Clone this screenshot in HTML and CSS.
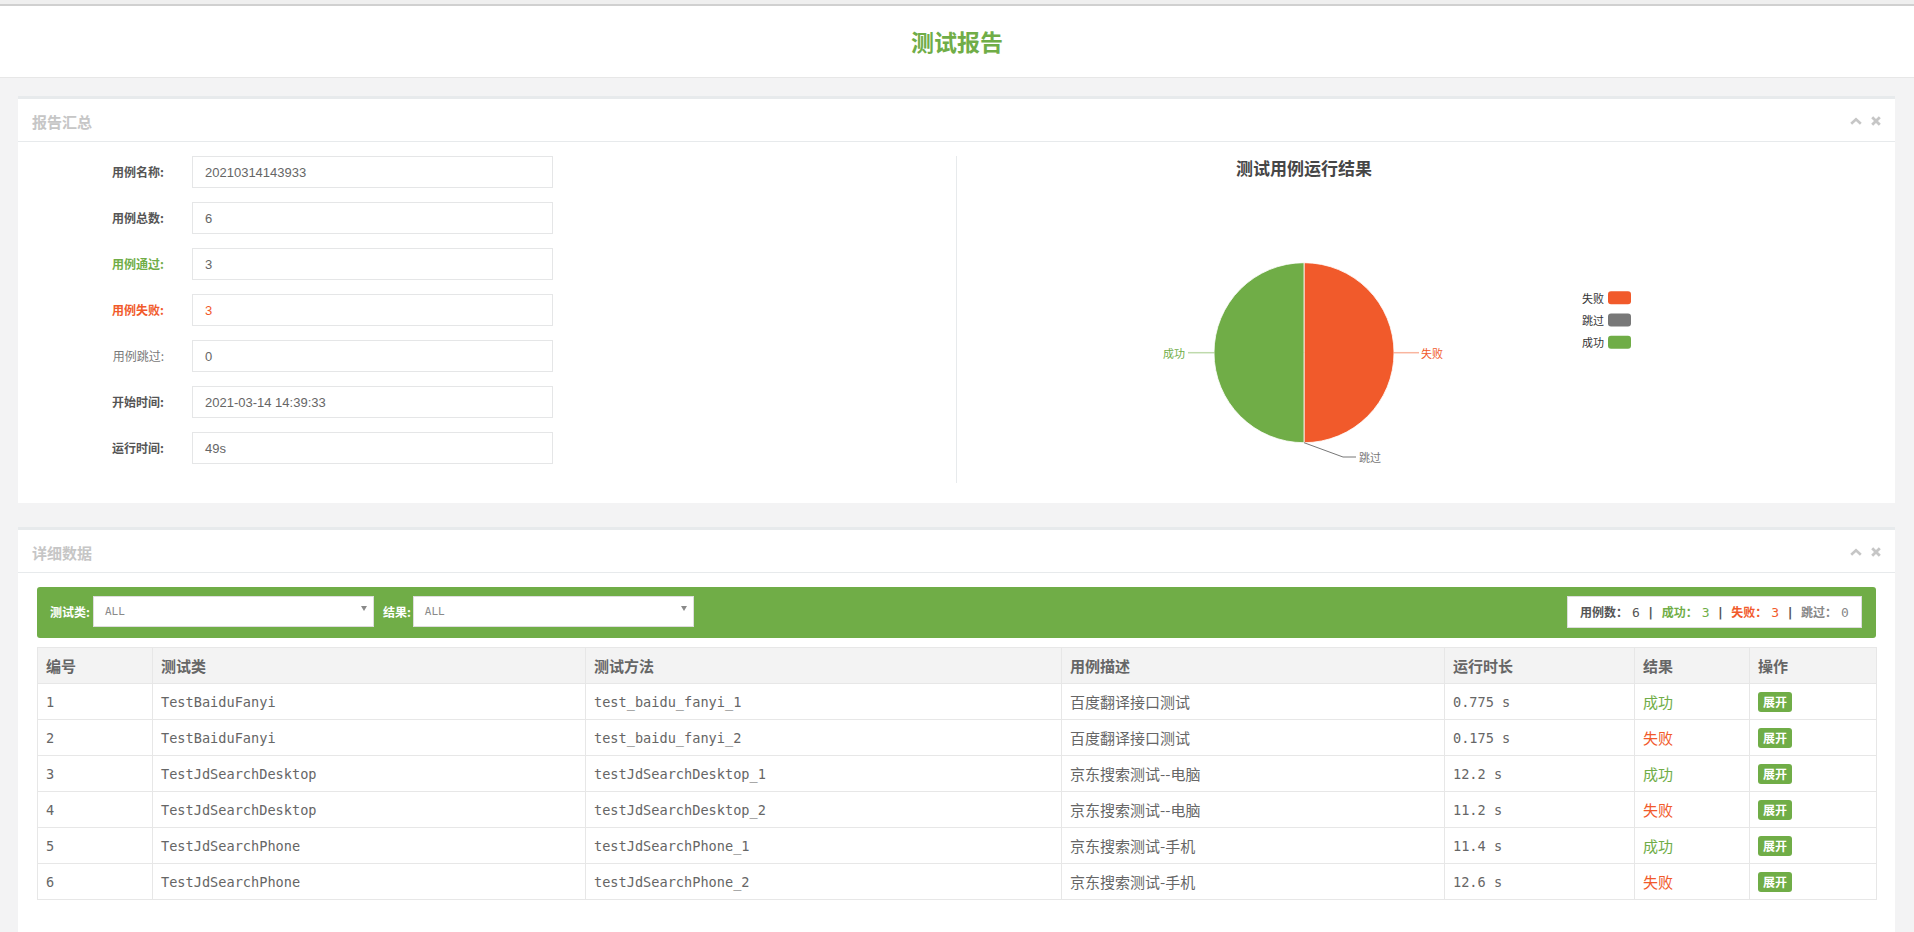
FILE: index.html
```html
<!DOCTYPE html>
<html lang="zh-CN">
<head>
<meta charset="utf-8">
<title>测试报告</title>
<link rel="stylesheet" href="styles.css">
</head>
<body>
<div class="top-strip"></div>
<header class="page-header">
  <h1 class="page-title">测试报告</h1>
</header>

<main class="wrapper">
  <section class="ibox">
    <div class="ibox-title">
      <h5>报告汇总</h5>
      <div class="tools">
        <svg class="tool-icon" width="12" height="8" viewBox="0 0 12 8"><polyline points="1.2,6.8 6,2.2 10.8,6.8" fill="none" stroke="#c6c6c6" stroke-width="2.6"/></svg>
        <svg class="tool-icon" width="10" height="10" viewBox="0 0 10 10"><path d="M1.2 1.2 L8.8 8.8 M8.8 1.2 L1.2 8.8" stroke="#c6c6c6" stroke-width="2.8"/></svg>
      </div>
    </div>
    <div class="ibox-content summary">
      <div class="form-col">
        <div class="form-row"><label class="form-label">用例名称:</label><div class="form-input">20210314143933</div></div>
        <div class="form-row"><label class="form-label">用例总数:</label><div class="form-input">6</div></div>
        <div class="form-row"><label class="form-label pass">用例通过:</label><div class="form-input">3</div></div>
        <div class="form-row"><label class="form-label fail">用例失败:</label><div class="form-input fail">3</div></div>
        <div class="form-row"><label class="form-label skip">用例跳过:</label><div class="form-input">0</div></div>
        <div class="form-row"><label class="form-label">开始时间:</label><div class="form-input">2021-03-14 14:39:33</div></div>
        <div class="form-row"><label class="form-label">运行时间:</label><div class="form-input">49s</div></div>
      </div>
      <div class="chart-col">
        <svg class="pie-chart" width="694" height="327" viewBox="0 0 694 327">
          <text class="chart-title" x="347" y="11" text-anchor="middle" dominant-baseline="central">测试用例运行结果</text>
          <path d="M347 196.7 L347 106.7 A90 90 0 0 1 347 286.7 Z" fill="#f15a2b" stroke="#ffffff" stroke-width="0.8"/>
          <path d="M347 196.7 L347 286.7 A90 90 0 0 1 347 106.7 Z" fill="#70ad47" stroke="#ffffff" stroke-width="0.8"/>
          <line x1="437" y1="196.7" x2="462" y2="196.7" stroke="#f15a2b" stroke-opacity="0.45" stroke-width="1.5"/>
          <text class="pie-label fail-fill" x="464" y="197" dominant-baseline="central">失败</text>
          <line x1="257" y1="196.7" x2="231" y2="196.7" stroke="#70ad47" stroke-opacity="0.45" stroke-width="1.5"/>
          <text class="pie-label pass-fill" x="228" y="197" text-anchor="end" dominant-baseline="central">成功</text>
          <polyline points="347,286.7 386,301 399,301" fill="none" stroke="#777777" stroke-width="1"/>
          <text class="pie-label skip-fill" x="402" y="301" dominant-baseline="central">跳过</text>
          <text class="legend-text" x="647" y="141.7" text-anchor="end" dominant-baseline="central">失败</text>
          <rect x="651" y="135.2" width="23" height="13" rx="3" fill="#f15a2b"/>
          <text class="legend-text" x="647" y="164" text-anchor="end" dominant-baseline="central">跳过</text>
          <rect x="651" y="157.5" width="23" height="13" rx="3" fill="#787878"/>
          <text class="legend-text" x="647" y="186.3" text-anchor="end" dominant-baseline="central">成功</text>
          <rect x="651" y="179.8" width="23" height="13" rx="3" fill="#70ad47"/>
        </svg>
      </div>
    </div>
  </section>

  <section class="ibox">
    <div class="ibox-title">
      <h5>详细数据</h5>
      <div class="tools">
        <svg class="tool-icon" width="12" height="8" viewBox="0 0 12 8"><polyline points="1.2,6.8 6,2.2 10.8,6.8" fill="none" stroke="#c6c6c6" stroke-width="2.6"/></svg>
        <svg class="tool-icon" width="10" height="10" viewBox="0 0 10 10"><path d="M1.2 1.2 L8.8 8.8 M8.8 1.2 L1.2 8.8" stroke="#c6c6c6" stroke-width="2.8"/></svg>
      </div>
    </div>
    <div class="ibox-content detail">
      <div class="filter-bar">
        <span class="filter-label">测试类:</span>
        <div class="select"><span class="select-text">ALL</span><span class="caret"></span></div>
        <span class="filter-label second">结果:</span>
        <div class="select"><span class="select-text">ALL</span><span class="caret"></span></div>
        <div class="stats">
          <b class="st-label">用例数：</b><span class="st-num">6</span><span class="st-sep">|</span><b class="st-label pass">成功：</b><span class="st-num pass">3</span><span class="st-sep">|</span><b class="st-label fail">失败：</b><span class="st-num fail">3</span><span class="st-sep">|</span><b class="st-label skip">跳过：</b><span class="st-num skip">0</span>
        </div>
      </div>

      <table class="data-table">
        <colgroup>
          <col class="c-no"><col class="c-class"><col class="c-method"><col class="c-desc"><col class="c-time"><col class="c-result"><col class="c-op">
        </colgroup>
        <thead>
          <tr><th>编号</th><th>测试类</th><th>测试方法</th><th>用例描述</th><th>运行时长</th><th>结果</th><th>操作</th></tr>
        </thead>
        <tbody>
          <tr><td>1</td><td>TestBaiduFanyi</td><td>test_baidu_fanyi_1</td><td class="cjk">百度翻译接口测试</td><td>0.775 s</td><td class="cjk pass">成功</td><td><span class="btn">展开</span></td></tr>
          <tr><td>2</td><td>TestBaiduFanyi</td><td>test_baidu_fanyi_2</td><td class="cjk">百度翻译接口测试</td><td>0.175 s</td><td class="cjk fail">失败</td><td><span class="btn">展开</span></td></tr>
          <tr><td>3</td><td>TestJdSearchDesktop</td><td>testJdSearchDesktop_1</td><td class="cjk">京东搜索测试--电脑</td><td>12.2 s</td><td class="cjk pass">成功</td><td><span class="btn">展开</span></td></tr>
          <tr><td>4</td><td>TestJdSearchDesktop</td><td>testJdSearchDesktop_2</td><td class="cjk">京东搜索测试--电脑</td><td>11.2 s</td><td class="cjk fail">失败</td><td><span class="btn">展开</span></td></tr>
          <tr><td>5</td><td>TestJdSearchPhone</td><td>testJdSearchPhone_1</td><td class="cjk">京东搜索测试-手机</td><td>11.4 s</td><td class="cjk pass">成功</td><td><span class="btn">展开</span></td></tr>
          <tr><td>6</td><td>TestJdSearchPhone</td><td>testJdSearchPhone_2</td><td class="cjk">京东搜索测试-手机</td><td>12.6 s</td><td class="cjk fail">失败</td><td><span class="btn">展开</span></td></tr>
        </tbody>
      </table>
    </div>
  </section>
</main>
</body>
</html>
```

FILE: styles.css
```css
html, body {
  margin: 0;
  padding: 0;
}

body {
  background: #f3f3f4;
  font-family: "Liberation Sans", Arial, "Noto Sans CJK SC", sans-serif;
  color: #676a6c;
}

.top-strip {
  height: 4px;
  background: #efefef;
  border-bottom: 2px solid #d0d0d0;
}

.page-header {
  height: 71px;
  background: #ffffff;
  border-bottom: 1px solid #e7e7e7;
  display: flex;
  align-items: center;
  justify-content: center;
}

.page-title {
  margin: 0;
  font: bold 23px/1 "Noto Sans CJK SC", sans-serif;
  color: #70ad47;
}

.wrapper {
  padding: 18px 19px 0 18px;
}

.ibox {
  background: #ffffff;
  border-top: 3px solid #e7eaec;
  margin-bottom: 24px;
}

.ibox-title {
  height: 42px;
  border-bottom: 1px solid #e7eaec;
  display: flex;
  align-items: center;
  justify-content: space-between;
  padding: 0 14px;
}

.ibox-title h5 {
  margin: 2px 0 0;
  font: bold 15px/1 "Noto Sans CJK SC", sans-serif;
  color: #c6c6c6;
}

.tools {
  display: flex;
  align-items: center;
  gap: 9px;
  padding-top: 1px;
}

.tool-icon {
  display: block;
}

/* summary panel */
.summary {
  display: flex;
  padding: 14px 19px 20px;
}

.form-col {
  flex: 1;
  border-right: 1px solid #e7eaec;
  display: flex;
  flex-direction: column;
  gap: 14px;
}

.chart-col {
  flex: 1;
}

.form-row {
  display: flex;
  align-items: center;
}

.form-label {
  width: 127px;
  margin-right: 28px;
  text-align: right;
  font: bold 12px/1 "Noto Sans CJK SC", sans-serif;
  color: #555555;
}

.form-label.pass { color: #70ad47; }
.form-label.fail { color: #f15a2b; }
.form-label.skip { color: #7a7a7a; font-weight: normal; }

.form-input {
  width: 361px;
  height: 32px;
  box-sizing: border-box;
  border: 1px solid #e5e6e7;
  padding: 0 12px;
  display: flex;
  align-items: center;
  font: 13px "Liberation Sans", Arial, sans-serif;
  color: #666666;
}

.form-input.fail { color: #f15a2b; }

.pie-chart {
  display: block;
  width: 694px;
  height: 327px;
}

.chart-title {
  font: bold 17px "Noto Sans CJK SC", sans-serif;
  fill: #464646;
}

.pie-label {
  font: 11px "Noto Sans CJK SC", sans-serif;
}

.pass-fill { fill: #70ad47; }
.fail-fill { fill: #f15a2b; }
.skip-fill { fill: #777777; }

.legend-text {
  font: 11px "Noto Sans CJK SC", sans-serif;
  fill: #333333;
}

/* detail panel */
.detail {
  padding: 14px 19px 40px;
}

.filter-bar {
  height: 51px;
  background: #70ad47;
  border-radius: 3px;
  display: flex;
  align-items: center;
  padding: 0 14px 0 13px;
  box-sizing: border-box;
}

.filter-label {
  font: bold 12px/1 "Noto Sans CJK SC", sans-serif;
  color: #ffffff;
  margin-right: 3px;
  margin-top: -2px;
}

.filter-label.second {
  margin-left: 9px;
  margin-right: 2px;
}

.select {
  width: 281px;
  height: 31px;
  box-sizing: border-box;
  background: #ffffff;
  border: 1px solid #dddddd;
  display: flex;
  align-items: center;
  justify-content: space-between;
  padding: 0 6px 0 11px;
  margin-top: -2px;
}

.select-text {
  font: 11px "DejaVu Sans Mono", monospace;
  color: #8a8a8a;
}

.caret {
  width: 0;
  height: 0;
  border-left: 3.5px solid transparent;
  border-right: 3.5px solid transparent;
  border-top: 5px solid #8a8a8a;
  margin-top: -6px;
}

.stats {
  margin-left: auto;
  width: 295px;
  height: 32px;
  box-sizing: border-box;
  background: #ffffff;
  border: 1px solid #dddddd;
  padding-left: 12px;
  display: flex;
  align-items: center;
  white-space: nowrap;
  margin-top: -1px;
}

.st-label {
  font: bold 12px/1 "Noto Sans CJK SC", sans-serif;
  color: #555555;
}

.st-num {
  font: 13px/1 "DejaVu Sans Mono", monospace;
  color: #555555;
  margin-left: 4px;
}

.st-sep {
  font: bold 13px/1 "DejaVu Sans Mono", monospace;
  color: #555555;
  margin: 0 7px;
}

.st-label.pass, .st-num.pass { color: #70ad47; }
.st-label.fail, .st-num.fail { color: #f15a2b; }
.st-label.skip, .st-num.skip { color: #888888; }

/* table */
.data-table {
  width: 100%;
  margin-top: 9px;
  border-collapse: collapse;
  table-layout: fixed;
}

.c-no { width: 115px; }
.c-class { width: 433px; }
.c-method { width: 476px; }
.c-desc { width: 383px; }
.c-time { width: 190px; }
.c-result { width: 115px; }
.c-op { width: 127px; }

.data-table th,
.data-table td {
  border: 1px solid #e7e7e7;
  height: 35px;
  padding: 0 8px;
  text-align: left;
  vertical-align: middle;
  white-space: nowrap;
}

.data-table th {
  background: #f3f3f3;
  font: bold 15px/20px "Noto Sans CJK SC", sans-serif;
  color: #666666;
}

.data-table td {
  font: 13.6px/20px "DejaVu Sans Mono", "Noto Sans CJK SC", monospace;
  color: #666666;
}

.data-table td.cjk {
  font: 15px/20px "Noto Sans CJK SC", sans-serif;
}

.data-table td.pass { color: #70ad47; }
.data-table td.fail { color: #f15a2b; }

.btn {
  display: inline-flex;
  align-items: center;
  justify-content: center;
  width: 34px;
  height: 20px;
  border-radius: 3px;
  background: #70ad47;
  color: #ffffff;
  font: bold 12px/1 "Noto Sans CJK SC", sans-serif;
  vertical-align: middle;
}
```
